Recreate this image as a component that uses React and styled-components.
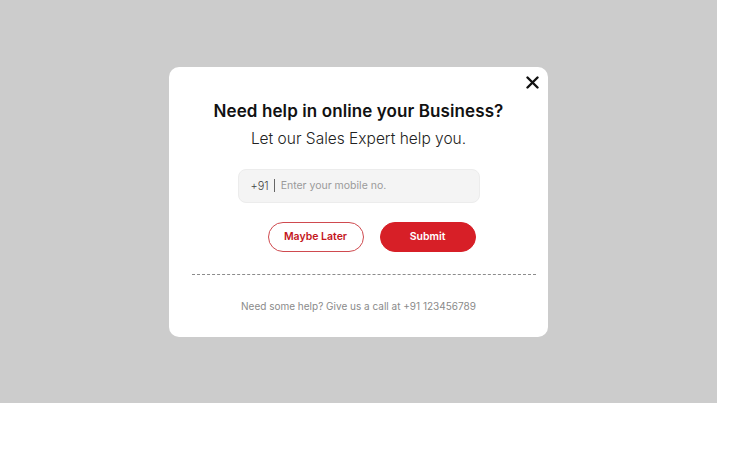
import React from "react";
import styled, { createGlobalStyle } from "styled-components";

const GlobalStyle = createGlobalStyle`
  html, body {
    margin: 0;
    padding: 0;
    background: #ffffff;
    font-family: "Inter", "Noto Sans", sans-serif;
  }
`;

function App() {
  return (
    <>
      <GlobalStyle />
      <Backdrop>
        <Modal>
          <CloseButton aria-label="Close">
            <svg width="13" height="13" viewBox="0 0 13 13">
              <path
                d="M1.5 1.5 L11.5 11.5 M11.5 1.5 L1.5 11.5"
                stroke="#111"
                strokeWidth="2.4"
                strokeLinecap="round"
              />
            </svg>
          </CloseButton>
          <Title>Need help in online your Business?</Title>
          <Subtitle>Let our Sales Expert help you.</Subtitle>
          <PhoneField>
            <Prefix>+91</Prefix>
            <Divider />
            <PhoneInput placeholder="Enter your mobile no." />
          </PhoneField>
          <Actions>
            <Button>Maybe Later</Button>
            <Button primary>Submit</Button>
          </Actions>
          <Dashed />
          <Footer>Need some help? Give us a call at +91 123456789</Footer>
        </Modal>
      </Backdrop>
    </>
  );
}

export default App;

const Backdrop = styled.div`
  width: 717px;
  height: 403px;
  background: #cccccc;
  display: flex;
  align-items: center;
  justify-content: center;
`;

const Modal = styled.div`
  position: relative;
  box-sizing: border-box;
  width: 379px;
  height: 270px;
  background: #ffffff;
  border-radius: 10px;
  padding: 33px 12px 0;
  display: flex;
  flex-direction: column;
  align-items: center;
`;

const CloseButton = styled.button`
  position: absolute;
  top: 3px;
  right: 3px;
  width: 26px;
  height: 26px;
  border: none;
  background: transparent;
  padding: 0;
  display: flex;
  align-items: center;
  justify-content: center;
  cursor: pointer;
`;

const Title = styled.h2`
  margin: 0;
  font-size: 17px;
  font-weight: 600;
  color: #111111;
  line-height: 22px;
  letter-spacing: 0.1px;
`;

const Subtitle = styled.p`
  margin: 6px 0 0;
  font-size: 15.5px;
  font-weight: 300;
  color: #222222;
  line-height: 22px;
`;

const PhoneField = styled.div`
  box-sizing: border-box;
  margin-top: 19px;
  width: 242px;
  height: 34px;
  background: #f4f4f4;
  border: 1px solid #ececec;
  border-radius: 8px;
  display: flex;
  align-items: center;
  padding: 0 12px;
`;

const Prefix = styled.span`
  font-size: 11px;
  font-weight: 300;
  color: #444444;
`;

const Divider = styled.span`
  width: 1px;
  height: 13px;
  background: #666666;
  margin: 0 6px 0 5px;
`;

const PhoneInput = styled.input`
  flex: 1;
  min-width: 0;
  border: none;
  background: transparent;
  outline: none;
  font-family: inherit;
  font-size: 10.5px;
  color: #333333;
  padding: 0;
  &::placeholder {
    color: #9a9a9a;
  }
`;

const Actions = styled.div`
  margin-top: 19px;
  margin-left: 26px;
  display: flex;
  gap: 16px;
`;

const Button = styled.button`
  box-sizing: border-box;
  width: 96px;
  height: 30px;
  border-radius: 15px;
  font-family: inherit;
  font-size: 10.5px;
  font-weight: 600;
  cursor: pointer;
  border: 1px solid ${(p) => (p.primary ? "#d71f27" : "#cf4a4f")};
  background: ${(p) => (p.primary ? "#d71f27" : "#ffffff")};
  color: ${(p) => (p.primary ? "#ffffff" : "#c4161c")};
`;

const Dashed = styled.div`
  margin-top: 22px;
  margin-left: 10px;
  width: 344px;
  border-top: 1px dashed #8c8c8c;
`;

const Footer = styled.p`
  margin: 24px 0 0;
  font-size: 10px;
  color: #8a8a8a;
  line-height: 14px;
`;
